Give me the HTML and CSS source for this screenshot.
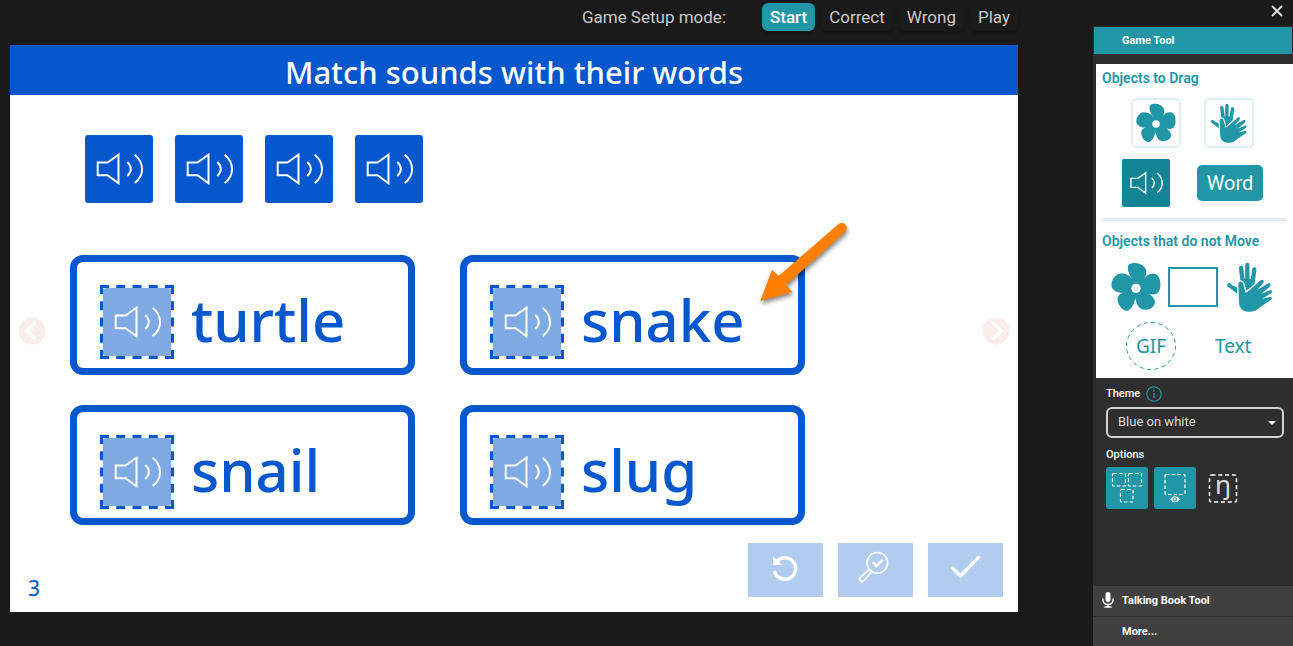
FILE: index.html
```html
<!DOCTYPE html>
<html lang="en">
<head>
<meta charset="utf-8">
<title>Match sounds with their words</title>
<link rel="stylesheet" href="styles.css">
</head>
<body>
<svg class="defs" aria-hidden="true">
  <symbol id="sound" viewBox="0 0 68 68">
    <path d="M12.7 27.5H22.5L33.5 19.7V48.3L22.5 40.2H12.7ZM42.3 27C47 31.5 47 36.500 42.300 41M49.700 19.800C59.500 28 59.500 40.500 49.700 48" fill="none" stroke="currentColor" stroke-width="2"/>
  </symbol>
  <symbol id="slot" viewBox="0 0 74 74">
    <rect x="3" y="3" width="68" height="68" rx="3" fill="#80aae4"/>
    <path d="M0 1.500H74M0 72.500H74M1.500 0V74M72.500 0V74" stroke="#0457cd" stroke-width="3" stroke-dasharray="9 7.250"/>
    <use href="#sound" x="3" y="3" width="68" height="68"/>
  </symbol>
  <symbol id="flower" viewBox="53 96 150 150">
    <path d="M117 148C106 132 98 113 108 103C122 93 152 101 158 119C161 130 156 142 151 149C160 134 174 127 187 132C204 140 206 178 192 190C180 197 163 192 152 187C169 190 183 201 185 216C184 234 162 243 146 238C134 233 129 219 126 205C122 221 115 238 103 242C88 245 71 223 73 204C75 191 89 187 101 187C82 191 62 187 55 171C51 153 64 134 80 131C97 129 110 138 117 148Z" fill="currentColor"/>
    <circle cx="128" cy="175" r="14" fill="#fff"/>
  </symbol>
  <symbol id="hands" viewBox="399 94 150 150">
    <g stroke="currentColor" stroke-width="13" stroke-linecap="round" fill="none">
      <path d="M447 112L453 158M466 103V165M487 116L480 168"/>
      <path d="M411 163L430 177" stroke-width="11"/>
    </g>
    <path d="M446 145L482 145L483 160L468 182L460 190L440 168Z" fill="currentColor"/>
    <path d="M424 165L436 171V190L425 180Z" fill="currentColor"/>
    <path d="M439 160C438 152 450 149 453 158L461 187L474 177L506 149C512 144 518 150 514 156L496 177L527 159C534 155 539 162 533 168L507 190L534 179C541 177 542 184 537 188L511 204L533 199C541 198 542 205 536 208L506 228C495 238 485 244 468 243C451 242 441 230 441 213Z" fill="currentColor" stroke="#fff" stroke-width="8" paint-order="stroke"/>
  </symbol>
</svg>

<div class="app">
  <main class="workspace">
    <div class="modes">
      <span class="modes-label">Game Setup mode:</span>
      <button class="mode active" type="button">Start</button>
      <button class="mode" type="button">Correct</button>
      <button class="mode" type="button">Wrong</button>
      <button class="mode" type="button">Play</button>
    </div>
    <section class="page">
      <h1 class="page-title">Match sounds with their words</h1>
      <div class="page-body">
        <div class="chips">
          <button class="chip" type="button" aria-label="Sound 1"><svg><use href="#sound"/></svg></button>
          <button class="chip" type="button" aria-label="Sound 2"><svg><use href="#sound"/></svg></button>
          <button class="chip" type="button" aria-label="Sound 3"><svg><use href="#sound"/></svg></button>
          <button class="chip" type="button" aria-label="Sound 4"><svg><use href="#sound"/></svg></button>
        </div>
        <div class="cards">
          <div class="card"><svg class="slot"><use href="#slot"/></svg><span>turtle</span></div>
          <div class="card"><svg class="slot"><use href="#slot"/></svg><span>snake</span></div>
          <div class="card"><svg class="slot"><use href="#slot"/></svg><span>snail</span></div>
          <div class="card"><svg class="slot"><use href="#slot"/></svg><span>slug</span></div>
        </div>
      </div>
      <footer class="page-footer">
        <span class="page-number">3</span>
        <div class="actions">
          <button class="action" type="button" aria-label="Try again"><svg viewBox="0 0 75 54"><path d="M29 18A10.800 10.800 0 1 1 26.300 28" fill="none" stroke="#fff" stroke-width="3.500"/><path d="M25 13.500V22H34.500Z" fill="#fff"/></svg></button>
          <button class="action" type="button" aria-label="Check answers"><svg viewBox="0 0 75 54" fill="none" stroke="#fff" stroke-linecap="round"><circle cx="39.300" cy="19.800" r="10.300" stroke-width="1.700"/><path d="M31 27L22 34.500C20 37 23.500 40 26 37.500L33.500 29" stroke-width="1.700"/><path d="M35.500 20L38.500 23L44 17.500" stroke-width="2.500"/></svg></button>
          <button class="action" type="button" aria-label="Show correct"><svg viewBox="0 0 75 54"><path d="M24.500 25L32.500 33L50.500 14.500" fill="none" stroke="#fff" stroke-width="3.500" stroke-linecap="round"/></svg></button>
        </div>
      </footer>
      <button class="turn previous" type="button" aria-label="Previous page"><svg viewBox="0 0 28 28"><circle cx="14" cy="14" r="13.500" fill="#f9eceb"/><path d="M17.500 5.500L9 14L17.500 22.500" fill="none" stroke="#fff" stroke-width="3.500"/></svg></button>
      <button class="turn next" type="button" aria-label="Next page"><svg viewBox="0 0 28 28"><circle cx="14" cy="14" r="13.500" fill="#f9eceb"/><path d="M10.500 5.500L19 14L10.500 22.500" fill="none" stroke="#fff" stroke-width="3.500"/></svg></button>
      <svg class="pointer" viewBox="750 215 110 100" aria-hidden="true"><path d="M760.300 301L772 269.700L778.500 276L838 224.500C844 220 850 227 844.500 232.500L786 285L792.300 292Z" fill="#ff8000"/></svg>
    </section>
  </main>

  <aside class="sidebar">
    <div class="close-row"><button class="close" type="button" aria-label="Close"><svg viewBox="0 0 12 12"><path d="M1 1L11 11M11 1L1 11" stroke="#e4e4e4" stroke-width="1.800"/></svg></button></div>
    <div class="panel">
      <h2 class="panel-title">Game Tool</h2>
      <div class="palette">
        <h3>Objects to Drag</h3>
        <div class="tools boxed">
          <button class="tool frame" type="button" aria-label="Picture"><svg><use href="#flower"/></svg></button>
          <button class="tool frame" type="button" aria-label="Sign language"><svg><use href="#hands"/></svg></button>
        </div>
        <div class="tools filled">
          <button class="tool sound" type="button" aria-label="Sound"><svg><use href="#sound"/></svg></button>
          <button class="tool word" type="button">Word</button>
        </div>
        <hr>
        <h3>Objects that do not Move</h3>
        <div class="tools fixed">
          <button class="tool" type="button" aria-label="Fixed picture"><svg><use href="#flower"/></svg></button>
          <button class="tool rectangle" type="button" aria-label="Rectangle"></button>
          <button class="tool" type="button" aria-label="Fixed sign language"><svg><use href="#hands"/></svg></button>
        </div>
        <div class="tools text-tools">
          <button class="tool gif" type="button"><svg viewBox="0 0 50 48"><ellipse cx="25" cy="24" rx="24.500" ry="23.500" fill="none" stroke="currentColor" stroke-dasharray="4 3.500"/></svg><span>GIF</span></button>
          <button class="tool text" type="button">Text</button>
        </div>
      </div>
      <div class="settings">
        <div class="setting-label"><label for="theme">Theme</label><svg class="info" viewBox="0 0 16 16"><circle cx="8" cy="8" r="7.200" fill="none" stroke="currentColor" stroke-width="1.200"/><path d="M8 7V12M8 4V5.500" stroke="currentColor" stroke-width="1.300"/></svg></div>
        <div class="select-box">
          <select id="theme"><option>Blue on white</option></select>
          <svg viewBox="0 0 8 4"><path d="M0 0H8L4 4Z" fill="#fff"/></svg>
        </div>
        <div class="setting-label">Options</div>
        <div class="options">
          <button class="option on" type="button" aria-label="Same size"><svg viewBox="0 0 42 42" fill="none" stroke="#fff" stroke-width="1.200" stroke-dasharray="3.500 2.200"><rect x="6.500" y="6.500" width="13" height="12.500" rx="1"/><rect x="22.500" y="6.500" width="13" height="12.500" rx="1"/><rect x="14.500" y="22.500" width="12.500" height="12.500" rx="1"/></svg></button>
          <button class="option on" type="button" aria-label="Show targets"><svg viewBox="0 0 42 42"><rect x="11" y="7.500" width="20" height="20" rx="1" fill="none" stroke="#fff" stroke-width="1.200" stroke-dasharray="3.500 2.200"/><path d="M16 32.500Q21 26 26 32.500Q21 38 16 32.500Z" fill="#fff"/><circle cx="21" cy="32.300" r="1.600" fill="#fff" stroke="#2096a6"/></svg></button>
          <button class="option" type="button" aria-label="Show answer"><svg viewBox="0 0 42 42"><rect x="7.500" y="8" width="27" height="27" rx="2" fill="none" stroke="#fff" stroke-width="1.500" stroke-dasharray="4 2.800"/></svg><span>ŋ</span></button>
        </div>
      </div>
      <button class="section" type="button"><svg viewBox="0 0 12 16"><rect x="3.500" y="0" width="5" height="10" rx="2.500" fill="#fff"/><path d="M1 6.500V8C1 14 11 14 11 8V6.500M6 12.500V15M2.500 15H9.500" fill="none" stroke="#fff" stroke-width="1.500"/></svg><span>Talking Book Tool</span></button>
      <button class="section" type="button"><span class="section-space"></span><span>More...</span></button>
    </div>
  </aside>
</div>
</body>
</html>
```

FILE: styles.css
```css
* { box-sizing: border-box; }
body { margin: 0; background: #1a1a1a; font-family: Roboto, "Liberation Sans", sans-serif; }
button { margin: 0; padding: 0; border: 0; background: none; color: inherit; font: inherit; cursor: pointer; }
svg { display: block; }
h1, h2, h3 { margin: 0; }
.defs { position: absolute; width: 0; height: 0; }
.app { display: grid; grid-template-columns: minmax(0, 1fr) 200px; min-height: 100vh; }

.workspace { padding: 0 75px 34px 10px; display: flex; flex-direction: column; }
.modes { display: flex; justify-content: flex-end; align-items: flex-start; gap: 6px; padding-top: 3px; height: 45px; color: #c9c9c9; font-size: 17px; line-height: 28px; }
.modes-label { margin-right: 30px; }
.mode { padding: 0 8px; border-radius: 6px; box-shadow: 0 2px 3px #0004; }
.mode.active { background: #2096a6; color: #fff; font-weight: 500; }

.page { position: relative; flex: 1; display: flex; flex-direction: column; background: #fff; color: #0457cd; font-family: "Noto Sans", "Open Sans", sans-serif; }
.page-title { background: #0457cd; color: #fff; font-size: 31px; font-weight: 500; line-height: 50px; padding-top: 2px; height: 50px; text-align: center; }
.page-body { flex: 1; padding: 40px 60px 0; }
.chips { display: flex; gap: 22px; padding-left: 15px; }
.chip { width: 68px; height: 68px; border-radius: 3px; background: #0457cd; color: #fff; }
.chip svg, .tool svg, .action svg, .option svg, .turn svg { width: 100%; height: 100%; }
.cards { display: grid; grid-template-columns: 1fr 1fr; gap: 30px 45px; max-width: 735px; margin-top: 52px; }
.card { display: flex; align-items: flex-start; gap: 17px; height: 120px; padding: 23px; border: 7px solid #0457cd; border-radius: 13px; font-size: 58px; font-weight: 500; line-height: 70px; }
.slot { width: 74px; height: 74px; color: #fff; }
.page-footer { display: flex; justify-content: space-between; align-items: flex-end; padding: 0 15px 15px 18px; }
.page-number { font-size: 21px; line-height: 18px; }
.actions { display: flex; gap: 15px; }
.action { width: 75px; height: 54px; background: #b2ccf0; }
.turn { position: absolute; top: 272px; width: 28px; height: 28px; }
.previous { left: 8px; }
.next { right: 8px; }
.pointer { position: absolute; left: 740px; top: 170px; width: 110px; height: 100px; filter: drop-shadow(1px 3px 2px #0007); }

.sidebar { display: flex; flex-direction: column; color: #fff; }
.close-row { display: flex; justify-content: flex-end; padding: 5px 10px 0 0; height: 26px; }
.close { width: 12px; height: 12px; }
.panel { flex: 1; display: flex; flex-direction: column; background: #2e2e2e; padding-top: 1px; }
.panel-title { margin: 0 1px; padding-left: 28px; background: #2096a6; font-size: 11px; font-weight: 700; line-height: 27px; }
.palette { margin: 10px 0 0 3px; padding: 4px 6px 8px; background: #fff; color: #2096a6; }
.palette h3 { font-size: 14px; font-weight: 600; line-height: 20px; }
.palette hr { margin: 11px 0 10px; border: 0; height: 3px; background: #dfeff0; }
.tools { display: flex; align-items: center; }
.boxed { gap: 23px; padding: 10px 0 0 29px; }
.frame { width: 50px; height: 50px; padding: 3px; border: 2px solid #e1eff1; border-radius: 5px; }
.filled { gap: 27px; padding: 11px 0 0 20px; }
.sound { width: 48px; height: 48px; border-radius: 2px; background: #118496; color: #fff; }
.word { width: 66px; height: 36px; border-radius: 5px; background: #2096a6; color: #fff; font-size: 20px; }
.fixed { gap: 7px; padding: 11px 0 0 9px; }
.fixed .tool { width: 50px; height: 50px; }
.fixed .rectangle { height: 40px; border: 2px solid #2096a6; }
.text-tools { gap: 39px; padding: 10px 0 0 24px; font-family: "Noto Sans", sans-serif; font-size: 19px; }
.gif { display: grid; width: 50px; height: 48px; }
.gif svg, .gif span, .option svg, .option span { grid-area: 1 / 1; }
.gif span { place-self: center; }
.settings { flex: 1; padding: 7px 9px 0 13px; font-size: 11px; }
.setting-label { display: flex; align-items: center; gap: 6px; font-weight: 500; line-height: 18px; }
.info { width: 16px; height: 16px; color: #2096a6; }
.select-box { display: grid; grid-template-columns: 1fr 8px; align-items: center; height: 31px; margin: 4px 0 8px; padding-right: 6px; border: 2px solid #d2d2d2; border-radius: 6px; }
.select-box select { grid-area: 1 / 1 / 2 / 3; width: 100%; height: 27px; padding: 0 0 2px 10px; border: 0; background: none; color: #d8d8d8; font: 13px Roboto, sans-serif; appearance: none; }
.select-box svg { grid-area: 1 / 2; width: 8px; height: 4px; pointer-events: none; }
.options { display: flex; gap: 6px; margin-top: 3px; }
.option { display: grid; width: 42px; height: 42px; border-radius: 3px; }
.option.on { background: #2096a6; }
.option span { align-self: start; justify-self: center; padding-top: 2px; color: #dcdcdc; font: 26px/30px "Noto Sans", sans-serif; }
.section { display: flex; align-items: center; gap: 8px; height: 30px; padding: 0 0 2px 9px; background: #404040; font-size: 11px; font-weight: 700; text-align: left; }
.section + .section { margin-top: 1px; height: 29px; padding-bottom: 0; }
.section svg { width: 12px; height: 16px; }
.section-space { width: 12px; }
```
